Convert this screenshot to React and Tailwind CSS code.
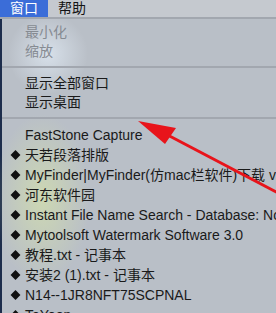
import React from "react";

const font = {
  fontFamily: '"Liberation Sans", "Noto Sans CJK SC", sans-serif',
};

const topItems = [
  { label: "最小化", disabled: true },
  { label: "缩放", disabled: true },
];

const showItems = [{ label: "显示全部窗口" }, { label: "显示桌面" }];

const windows = [
  { label: "FastStone Capture", mark: false },
  { label: "天若段落排版", mark: true },
  { label: "MyFinder|MyFinder(仿mac栏软件)下载 v1.0", mark: true },
  { label: "河东软件园", mark: true },
  { label: "Instant File Name Search - Database: None", mark: true },
  { label: "Mytoolsoft Watermark Software 3.0", mark: true },
  { label: "教程.txt - 记事本", mark: true },
  { label: "安装2 (1).txt - 记事本", mark: true },
  { label: "N14--1JR8NFT75SCPNAL", mark: true },
  { label: "TeYoon", mark: true },
];

const Separator = () => (
  <div className="mt-[5px] mb-[6px] h-[2px] bg-[#a2a7af]" />
);

const Row = ({ label, disabled, mark, tall }) => (
  <div
    className={`relative flex items-center pl-[23px] text-[14px] whitespace-nowrap ${
      tall ? "h-[20px]" : "h-[19px]"
    } ${disabled ? "text-[#868b92]" : "text-[#1a1a1a]"}`}
  >
    {mark && (
      <span className="absolute left-[10px] top-1/2 -translate-y-1/2 w-[7px] h-[7px] rotate-45 bg-[#111]" />
    )}
    {label}
  </div>
);

export default function App() {
  return (
    <div
      className="relative w-[276px] h-[313px] overflow-hidden bg-[#b9bfc7]"
      style={font}
    >
      {/* menu bar */}
      <div className="flex h-[17px] items-center bg-[#c5c9cf] text-[14px]">
        <div className="flex h-full w-[48px] items-center justify-center bg-[#3b6dd8] text-white">
          窗口
        </div>
        <div className="pl-[10px] text-[#141414]">帮助</div>
      </div>

      {/* dropdown */}
      <div className="relative flex h-[296px]">
        <div className="w-[2px] shrink-0 bg-[#1d2d4c]" />
        <div className="flex-1 overflow-hidden border-t-2 border-[#a2a7af] pt-[4px] bg-[radial-gradient(circle_at_48px_35px,rgba(228,238,248,0.7),transparent_40px),radial-gradient(ellipse_48px_85px_at_42px_180px,rgba(218,232,165,0.6),transparent)] -ml-[2px] pl-[2px]">
          {topItems.map((it) => (
            <Row key={it.label} {...it} />
          ))}
          <Separator />
          {showItems.map((it) => (
            <Row key={it.label} {...it} />
          ))}
          <Separator />
          {windows.map((it) => (
            <Row key={it.label} {...it} tall />
          ))}
        </div>
      </div>

      {/* red annotation arrow */}
      <svg
        className="absolute left-0 top-0 pointer-events-none"
        width="276"
        height="313"
        viewBox="0 0 276 313"
      >
        <line
          x1="160"
          y1="131"
          x2="280"
          y2="194"
          stroke="#e8141b"
          strokeWidth="3"
        />
        <polygon points="138,121 176,128 165,144" fill="#e8141b" />
      </svg>
    </div>
  );
}
